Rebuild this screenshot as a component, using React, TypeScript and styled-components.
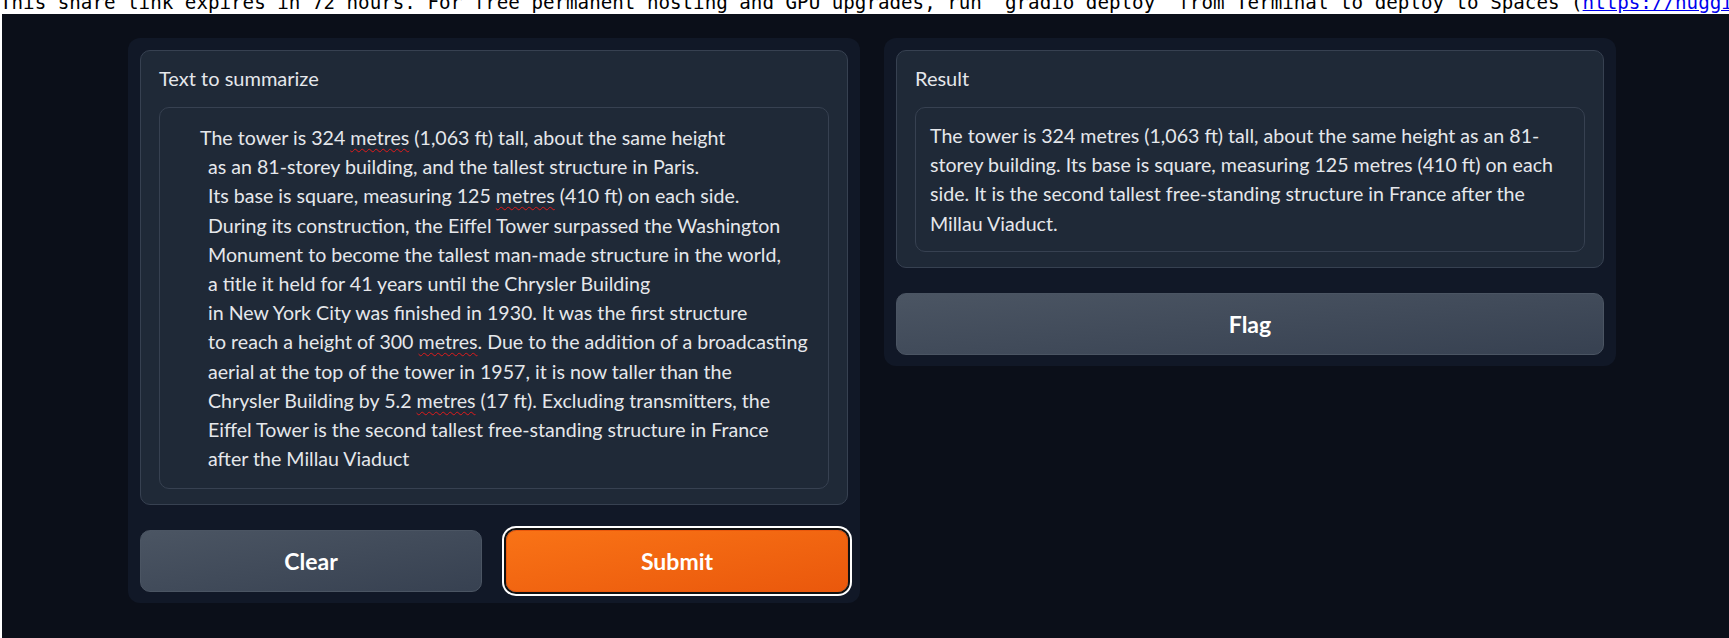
import styled, { createGlobalStyle } from "styled-components";

const GlobalStyle = createGlobalStyle`
  html, body {
    margin: 0;
    padding: 0;
    background: #ffffff;
  }
  body {
    font-family: Lato, "Noto Sans", sans-serif;
  }
  * {
    box-sizing: border-box;
  }
`;

const ShareNotice = styled.div`
  height: 14px;
  overflow: hidden;
  background: #ffffff;
`;

const NoticeText = styled.div`
  margin-top: -7px;
  font-family: "DejaVu Sans Mono", "Liberation Mono", monospace;
  font-size: 19.2px;
  line-height: 19.2px;
  white-space: nowrap;
  color: #000000;

  a {
    color: #0000ee;
    text-decoration: underline;
  }
`;

const AppShell = styled.main`
  margin-left: 2px;
  min-height: 624px;
  padding: 24px 0 0 126px;
  background: #0b0f19;
`;

const Row = styled.div`
  display: flex;
  align-items: flex-start;
  gap: 24px;
`;

const Column = styled.div`
  width: 732px;
  padding: 12px 12px 11px;
  display: flex;
  flex-direction: column;
  gap: 25px;
  background: #111827;
  border-radius: 12px;
`;

const Block = styled.div`
  padding: 13px 18px 15px;
  display: flex;
  flex-direction: column;
  gap: 14px;
  background: #1f2937;
  border: 1px solid #374151;
  border-radius: 10px;
`;

const Label = styled.span`
  display: block;
  font-size: 20px;
  line-height: 29px;
  color: #e5e7eb;
`;

const TextBox = styled.div<{ $compact?: boolean }>`
  padding: ${(p) => (p.$compact ? "13px 14px" : "15px 14px")};
  font-size: 19.6px;
  line-height: 29.2px;
  color: #e5e7eb;
  background: #1f2937;
  border: 1px solid #374151;
  border-radius: 10px;
`;

const Line = styled.div<{ $indent?: number }>`
  padding-left: ${(p) => p.$indent ?? 0}px;
  white-space: nowrap;
`;

const Misspelled = styled.span`
  text-decoration: underline wavy #e01b1b;
  text-decoration-thickness: 1px;
  text-underline-offset: 3px;
`;

const ButtonRow = styled.div`
  display: grid;
  grid-template-columns: 1fr 1fr;
  gap: 24px;
`;

const Button = styled.button<{ $primary?: boolean }>`
  height: 62px;
  font-family: Lato, "Noto Sans", sans-serif;
  font-size: 23px;
  font-weight: 700;
  color: #ffffff;
  border-radius: 10px;
  cursor: pointer;
  border: 1px solid ${(p) => (p.$primary ? "#ea580c" : "#4b5563")};
  background: ${(p) =>
    p.$primary
      ? "linear-gradient(to bottom right, #f97316, #ea580c)"
      : "linear-gradient(to bottom right, #4b5563, #374151)"};
  box-shadow: ${(p) =>
    p.$primary ? "0 0 0 2px #111111, 0 0 0 4px #ffffff" : "none"};
`;

const source: { text: React.ReactNode; indent: number }[] = [
  { indent: 26, text: <>The tower is 324 <Misspelled>metres</Misspelled> (1,063 ft) tall, about the same height</> },
  { indent: 34, text: "as an 81-storey building, and the tallest structure in Paris." },
  { indent: 34, text: <>Its base is square, measuring 125 <Misspelled>metres</Misspelled> (410 ft) on each side.</> },
  { indent: 34, text: "During its construction, the Eiffel Tower surpassed the Washington" },
  { indent: 34, text: "Monument to become the tallest man-made structure in the world," },
  { indent: 34, text: "a title it held for 41 years until the Chrysler Building" },
  { indent: 34, text: "in New York City was finished in 1930. It was the first structure" },
  { indent: 34, text: <>to reach a height of 300 <Misspelled>metres</Misspelled>. Due to the addition of a broadcasting</> },
  { indent: 34, text: "aerial at the top of the tower in 1957, it is now taller than the" },
  { indent: 34, text: <>Chrysler Building by 5.2 <Misspelled>metres</Misspelled> (17 ft). Excluding transmitters, the</> },
  { indent: 34, text: "Eiffel Tower is the second tallest free-standing structure in France" },
  { indent: 34, text: "after the Millau Viaduct" },
];

const summary = [
  "The tower is 324 metres (1,063 ft) tall, about the same height as an 81-",
  "storey building. Its base is square, measuring 125 metres (410 ft) on each",
  "side. It is the second tallest free-standing structure in France after the",
  "Millau Viaduct.",
];

export default function App() {
  return (
    <>
      <GlobalStyle />
      <ShareNotice>
        <NoticeText>
          This share link expires in 72 hours. For free permanent hosting and GPU upgrades, run `gradio deploy` from
          Terminal to deploy to Spaces (<a href="#">https://huggingface.co/spaces</a>)
        </NoticeText>
      </ShareNotice>
      <AppShell>
        <Row>
          <Column>
            <Block>
              <Label>Text to summarize</Label>
              <TextBox>
                {source.map((l, i) => (
                  <Line key={i} $indent={l.indent}>
                    {l.text}
                  </Line>
                ))}
              </TextBox>
            </Block>
            <ButtonRow>
              <Button>Clear</Button>
              <Button $primary>Submit</Button>
            </ButtonRow>
          </Column>
          <Column>
            <Block>
              <Label>Result</Label>
              <TextBox $compact>
                {summary.map((l, i) => (
                  <Line key={i}>{l}</Line>
                ))}
              </TextBox>
            </Block>
            <Button>Flag</Button>
          </Column>
        </Row>
      </AppShell>
    </>
  );
}
